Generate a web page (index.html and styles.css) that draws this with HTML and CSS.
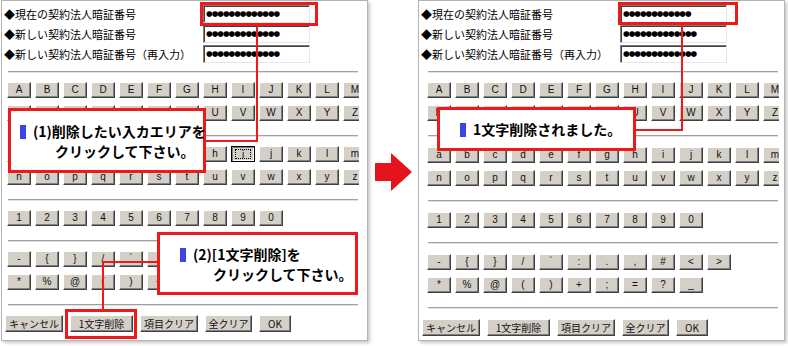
FILE: index.html
```html
<!DOCTYPE html>
<html>
<head>
    <meta charset="UTF-8">
    <title>暗証番号変更</title>
    <link rel="stylesheet" href="styles.css">
</head>
<body>
<div class="page">

    <!-- step 1 -->
    <section class="panel">
        <div class="fields">
            <div class="field"><span class="label">◆現在の契約法人暗証番号</span><span class="input">●●●●●●●●●●●●●</span></div>
            <div class="field"><span class="label">◆新しい契約法人暗証番号</span><span class="input">●●●●●●●●●●●●●</span></div>
            <div class="field"><span class="label">◆新しい契約法人暗証番号（再入力）</span><span class="input">●●●●●●●●●●●●●</span></div>
        </div>
        <div class="board">
            <div class="rule"></div>
            <div class="keys">
                <button class="key">A</button><button class="key">B</button><button class="key">C</button><button class="key">D</button><button class="key">E</button><button class="key">F</button><button class="key">G</button><button class="key">H</button><button class="key">I</button><button class="key">J</button><button class="key">K</button><button class="key">L</button><button class="key">M</button>
            </div>
            <div class="keys">
                <button class="key">N</button><button class="key">O</button><button class="key">P</button><button class="key">Q</button><button class="key">R</button><button class="key">S</button><button class="key">T</button><button class="key">U</button><button class="key">V</button><button class="key">W</button><button class="key">X</button><button class="key">Y</button><button class="key">Z</button>
            </div>
            <div class="rule"></div>
            <div class="keys">
                <button class="key">a</button><button class="key">b</button><button class="key">c</button><button class="key">d</button><button class="key">e</button><button class="key">f</button><button class="key">g</button><button class="key">h</button><button class="key pressed"><span class="focus">i</span></button><button class="key">j</button><button class="key">k</button><button class="key">l</button><button class="key">m</button>
            </div>
            <div class="keys">
                <button class="key">n</button><button class="key">o</button><button class="key">p</button><button class="key">q</button><button class="key">r</button><button class="key">s</button><button class="key">t</button><button class="key">u</button><button class="key">v</button><button class="key">w</button><button class="key">x</button><button class="key">y</button><button class="key">z</button>
            </div>
            <div class="rule"></div>
            <div class="keys">
                <button class="key">1</button><button class="key">2</button><button class="key">3</button><button class="key">4</button><button class="key">5</button><button class="key">6</button><button class="key">7</button><button class="key">8</button><button class="key">9</button><button class="key">0</button>
            </div>
            <div class="rule"></div>
            <div class="keys">
                <button class="key">-</button><button class="key">{</button><button class="key">}</button><button class="key">/</button><button class="key">`</button><button class="key">:</button><button class="key">.</button><button class="key">,</button><button class="key">#</button><button class="key">&lt;</button><button class="key">&gt;</button>
            </div>
            <div class="keys">
                <button class="key">*</button><button class="key">%</button><button class="key">@</button><button class="key">(</button><button class="key">)</button><button class="key">+</button><button class="key">;</button><button class="key">=</button><button class="key">?</button><button class="key">_</button>
            </div>
            <div class="rule"></div>
        </div>
        <div class="actions">
            <button class="btn w-cancel">キャンセル</button>
            <button class="btn w-del">1文字削除</button>
            <button class="btn w-clear">項目クリア</button>
            <button class="btn w-all">全クリア</button>
            <button class="btn w-ok">OK</button>
        </div>

        <div class="mark mark-input1"></div>
        <div class="wire wire1-v"></div>
        <div class="wire wire1-h"></div>
        <div class="note note1">
            <p class="note-line"><span class="bullet"></span>(1)削除したい入カエリアを</p>
            <p class="note-line note1-2">クリックして下さい。</p>
        </div>
        <div class="wire wire2-h"></div>
        <div class="wire wire2-v"></div>
        <div class="note note2">
            <p class="note-line"><span class="bullet"></span>(2)[1文字削除]を</p>
            <p class="note-line note2-2">クリックして下さい。</p>
        </div>
        <div class="mark mark-del"></div>
    </section>

    <div class="arrow">
        <svg width="37" height="38" viewBox="0 0 37 38">
            <rect x="0" y="10" width="17" height="18" fill="#e5131d"/>
            <polygon points="16,0 37,19 16,38" fill="#e5131d"/>
        </svg>
    </div>

    <!-- step 2 -->
    <section class="panel panel-after">
        <div class="fields">
            <div class="field"><span class="label">◆現在の契約法人暗証番号</span><span class="input">●●●●●●●●●●●●</span></div>
            <div class="field"><span class="label">◆新しい契約法人暗証番号</span><span class="input">●●●●●●●●●●●●●</span></div>
            <div class="field"><span class="label">◆新しい契約法人暗証番号（再入力）</span><span class="input">●●●●●●●●●●●●●</span></div>
        </div>
        <div class="board">
            <div class="rule"></div>
            <div class="keys">
                <button class="key">A</button><button class="key">B</button><button class="key">C</button><button class="key">D</button><button class="key">E</button><button class="key">F</button><button class="key">G</button><button class="key">H</button><button class="key">I</button><button class="key">J</button><button class="key">K</button><button class="key">L</button><button class="key">M</button>
            </div>
            <div class="keys">
                <button class="key">N</button><button class="key">O</button><button class="key">P</button><button class="key">Q</button><button class="key">R</button><button class="key">S</button><button class="key">T</button><button class="key">U</button><button class="key">V</button><button class="key">W</button><button class="key">X</button><button class="key">Y</button><button class="key">Z</button>
            </div>
            <div class="rule"></div>
            <div class="keys">
                <button class="key">a</button><button class="key">b</button><button class="key">c</button><button class="key">d</button><button class="key">e</button><button class="key">f</button><button class="key">g</button><button class="key">h</button><button class="key">i</button><button class="key">j</button><button class="key">k</button><button class="key">l</button><button class="key">m</button>
            </div>
            <div class="keys">
                <button class="key">n</button><button class="key">o</button><button class="key">p</button><button class="key">q</button><button class="key">r</button><button class="key">s</button><button class="key">t</button><button class="key">u</button><button class="key">v</button><button class="key">w</button><button class="key">x</button><button class="key">y</button><button class="key">z</button>
            </div>
            <div class="rule"></div>
            <div class="keys">
                <button class="key">1</button><button class="key">2</button><button class="key">3</button><button class="key">4</button><button class="key">5</button><button class="key">6</button><button class="key">7</button><button class="key">8</button><button class="key">9</button><button class="key">0</button>
            </div>
            <div class="rule"></div>
            <div class="keys">
                <button class="key">-</button><button class="key">{</button><button class="key">}</button><button class="key">/</button><button class="key">`</button><button class="key">:</button><button class="key">.</button><button class="key">,</button><button class="key">#</button><button class="key">&lt;</button><button class="key">&gt;</button>
            </div>
            <div class="keys">
                <button class="key">*</button><button class="key">%</button><button class="key">@</button><button class="key">(</button><button class="key">)</button><button class="key">+</button><button class="key">;</button><button class="key">=</button><button class="key">?</button><button class="key">_</button>
            </div>
            <div class="rule"></div>
        </div>
        <div class="actions">
            <button class="btn w-cancel">キャンセル</button>
            <button class="btn w-del">1文字削除</button>
            <button class="btn w-clear">項目クリア</button>
            <button class="btn w-all">全クリア</button>
            <button class="btn w-ok">OK</button>
        </div>

        <div class="mark mark-input2"></div>
        <div class="wire wire3-v"></div>
        <div class="wire wire3-h"></div>
        <div class="note note3">
            <p class="note-line"><span class="bullet"></span>1文字削除されました。</p>
        </div>
    </section>

</div>
</body>
</html>
```

FILE: styles.css
```css
* {
    box-sizing: border-box;
}

body {
    margin: 0;
    padding: 0;
    background: #fff;
    font-family: "Noto Sans CJK JP", sans-serif;
    color: #000;
}

.page {
    display: flex;
    width: 788px;
    height: 346px;
    padding-left: 1px;
}

.panel {
    position: relative;
    width: 367px;
    height: 341px;
    border: 1px solid #b4b4b4;
    box-shadow: 2px 2px 3px rgba(0, 0, 0, 0.22);
    background: #fff;
}

/* input fields */
.fields {
    padding: 3px 0 0 2px;
}

.field {
    display: flex;
    height: 20px;
    align-items: center;
}

.label {
    width: 199px;
    font-size: 11px;
    line-height: 20px;
    white-space: nowrap;
}

.input {
    width: 107px;
    height: 18px;
    padding-left: 2px;
    border: 1px solid;
    border-color: #7a7a7a #e6e6e6 #e6e6e6 #7a7a7a;
    box-shadow: inset 1px 1px #404040;
    font-family: "DejaVu Sans", sans-serif;
    font-size: 7.6px;
    line-height: 16px;
    letter-spacing: -1px;
    white-space: nowrap;
    overflow: hidden;
}

/* keyboard */
.board {
    width: 352px;
    margin-left: 5px;
    overflow: hidden;
}

.rule {
    margin: 14px 1px 9px;
    height: 2px;
    border-top: 1px solid #a0a0a0;
    border-bottom: 1px solid #e2e2e2;
}

.board .rule:first-child {
    margin-top: 7px;
}

.keys {
    display: flex;
    gap: 4px;
    margin-bottom: 7px;
}

.key,
.btn {
    flex: none;
    padding: 0;
    margin: 0;
    background: #d4d0c8;
    border: 1px solid;
    border-color: #fff #404040 #404040 #fff;
    box-shadow: inset -1px -1px #808080;
    color: #111;
    font-family: "Liberation Sans", sans-serif;
    font-size: 10px;
    line-height: 14px;
    text-align: center;
}

.key {
    width: 24px;
    height: 16px;
}

.key.pressed {
    border-color: #000;
    box-shadow: inset 1px 1px #808080, inset -1px -1px #fff;
    padding: 2px 3px;
}

.focus {
    display: block;
    height: 10px;
    line-height: 9px;
    border: 1px dotted #000;
}

.actions {
    display: flex;
    gap: 7px;
    margin: 0 0 0 3px;
}

.btn {
    height: 17px;
    font-family: "Noto Sans CJK JP", sans-serif;
    font-size: 10px;
    line-height: 14px;
}

.w-cancel { width: 58px; }
.w-del { width: 63px; }
.w-clear { width: 58px; }
.w-all { width: 47px; }
.w-ok { width: 32px; }

/* the second shot is scaled a little larger */
.panel-after .board {
    margin-left: 8px;
}

.panel-after .board .rule {
    margin-bottom: 10px;
}

.panel-after .board .rule:first-child {
    margin-bottom: 9px;
}

/* arrow between the two steps */
.arrow {
    width: 50px;
    padding: 153px 0 0 7px;
}

.arrow svg {
    display: block;
}

/* callouts */
.mark {
    position: absolute;
    border: 3px solid #ee1a1a;
}

.wire {
    position: absolute;
    background: #ee1a1a;
}

.note {
    position: absolute;
    display: flex;
    flex-direction: column;
    justify-content: center;
    background: #fff;
    border: 3px solid #ee1a1a;
}

.note-line {
    margin: 0;
    font-size: 14px;
    font-weight: bold;
    line-height: 20px;
    white-space: nowrap;
}

.bullet {
    display: inline-block;
    width: 6px;
    height: 14px;
    margin-right: 7px;
    vertical-align: -2px;
    background: #3b46e2;
}

.mark-input1 { left: 198px; top: 1px; width: 118px; height: 24px; }
.wire1-v { left: 254px; top: 24px; width: 2px; height: 117px; }
.wire1-h { left: 203px; top: 139px; width: 53px; height: 2px; }
.note1 { left: 6px; top: 107px; width: 198px; height: 65px; padding-left: 9px; }
.note1-2 { padding-left: 35px; }

.wire2-h { left: 100px; top: 260px; width: 56px; height: 2px; }
.wire2-v { left: 100px; top: 260px; width: 2px; height: 49px; }
.note2 { left: 155px; top: 231px; width: 201px; height: 63px; padding-left: 20px; }
.note2-2 { padding-left: 33px; }
.mark-del { left: 63px; top: 308px; width: 72px; height: 30px; }

.mark-input2 { left: 199px; top: 1px; width: 120px; height: 23px; }
.wire3-v { left: 262px; top: 23px; width: 2px; height: 107px; }
.wire3-h { left: 216px; top: 128px; width: 48px; height: 2px; }
.note3 { left: 18px; top: 106px; width: 199px; height: 44px; padding-left: 20px; }
```
